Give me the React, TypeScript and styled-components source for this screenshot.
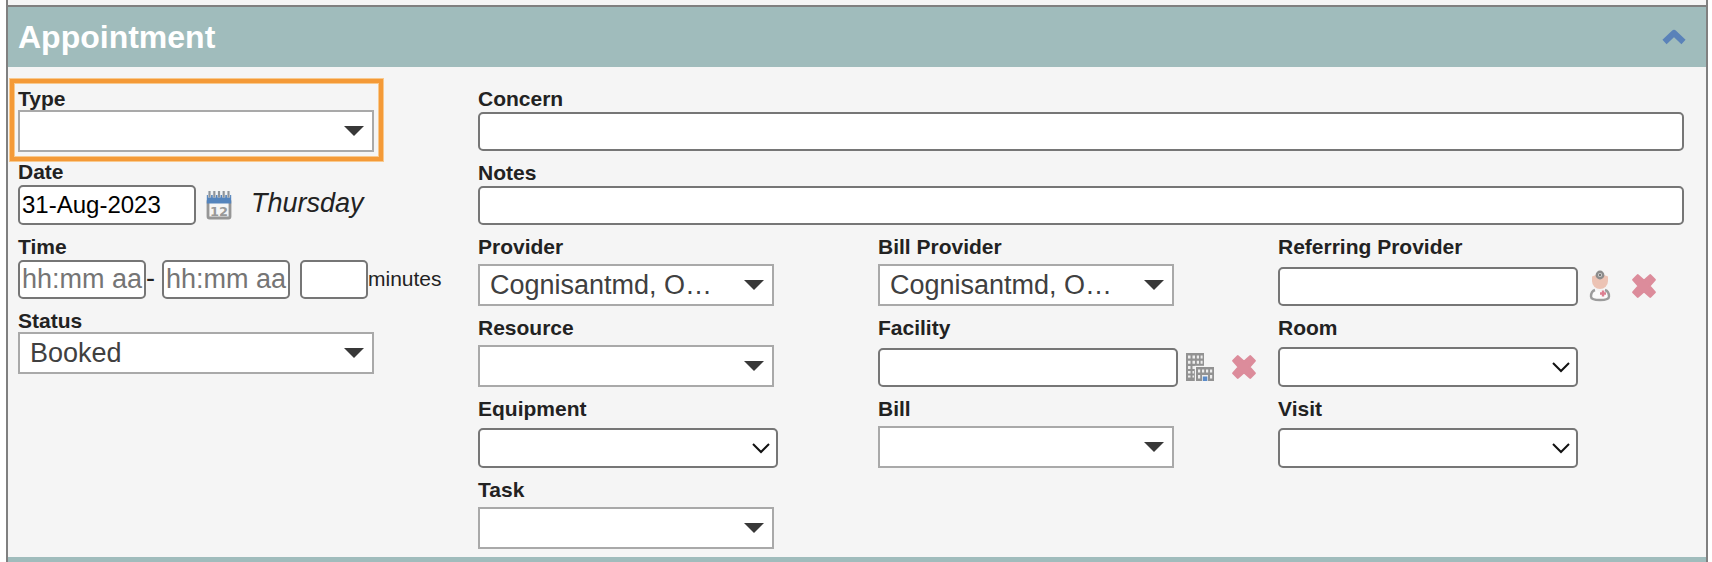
import React, { useState } from "react";
import styled, { createGlobalStyle } from "styled-components";

const GlobalStyle = createGlobalStyle`
  * { box-sizing: border-box; }
  body {
    margin: 0;
    background: #ffffff;
    color: #222222;
    font-family: "Liberation Sans", Arial, Helvetica, sans-serif;
    font-size: 21px;
  }
  input, select, button { font-family: inherit; margin: 0; }
`;

const Panel = styled.form`
  margin: 0 4px 0 6px;
  padding-top: 5px;
  border-left: 2px solid #808080;
  border-right: 2px solid #808080;
  background: #f5f5f5;
`;

const SectionHeader = styled.header`
  display: flex;
  align-items: center;
  justify-content: space-between;
  height: 62px;
  padding: 0 16px 0 10px;
  border-top: 2px solid #808080;
  background: #a0bcbc;
`;

const SectionTitle = styled.h2`
  margin: 0;
  color: #ffffff;
  font-size: 32px;
  line-height: 36px;
  font-weight: bold;
`;

const NextSection = styled.div`
  height: 5px;
  background: #a0bcbc;
`;

const Body = styled.div`
  display: grid;
  grid-template-columns: 460px 1fr;
  padding: 10px 22px 8px 10px;
`;

const Column = styled.div`
  display: flex;
  flex-direction: column;
`;

const FieldGrid = styled.div`
  display: grid;
  grid-template-columns: repeat(3, 1fr);
  padding-right: 6px;
`;

const Field = styled.div<{ $drop?: boolean }>`
  position: relative;
  padding-top: 11px;
  width: ${(p) => (p.$drop ? "356px" : "auto")};
  margin-bottom: ${(p) => (p.$drop ? "-2px" : "0")};
`;

const Label = styled.label`
  display: block;
  font-size: 21px;
  line-height: 22px;
  font-weight: bold;
`;

const ControlRow = styled.div<{ $height: number }>`
  display: flex;
  align-items: flex-end;
  height: ${(p) => p.$height}px;
`;

const InlineRow = styled.div`
  display: flex;
  align-items: center;
  margin-top: 2px;
`;

const UnitLabel = styled.label`
  line-height: 24px;
  padding-bottom: 2px;
`;

const TextBox = styled.input<{ $width?: string; $size?: number; $height?: number }>`
  width: ${(p) => p.$width ?? "100%"};
  height: ${(p) => p.$height ?? 39}px;
  flex: none;
  padding: 0 0 0 2px;
  border: 2px solid #767676;
  border-radius: 5px;
  background: #ffffff;
  color: #000000;
  font-size: ${(p) => p.$size ?? 27}px;
  outline: none;
  &::placeholder { color: #757575; opacity: 1; }
`;

const SelectShell = styled.div<{ $width: string }>`
  display: grid;
  align-items: center;
  width: ${(p) => p.$width};
  > * { grid-area: 1 / 1; }
  > svg { justify-self: end; pointer-events: none; }
`;

const FlatSelect = styled.select`
  appearance: none;
  width: 100%;
  height: 42px;
  padding: 0 40px 0 10px;
  border: 2px solid #a9a9a9;
  border-radius: 0;
  background: #ffffff;
  color: #404040;
  font-size: 27px;
  outline: none;
`;

const RoundSelect = styled(FlatSelect)`
  height: 40px;
  border-color: #767676;
  border-radius: 5px;
`;

const IconButton = styled.button<{ $gap?: number }>`
  display: flex;
  align-items: center;
  justify-content: center;
  flex: none;
  width: 32px;
  height: 40px;
  margin-left: ${(p) => p.$gap ?? 0}px;
  padding: 0;
  border: 0;
  background: none;
  cursor: pointer;
`;

const LargeText = styled.span<{ $before?: number; $after?: number; $italic?: boolean }>`
  margin-left: ${(p) => p.$before ?? 0}px;
  margin-right: ${(p) => p.$after ?? 0}px;
  padding-bottom: 4px;
  font-size: 27px;
  line-height: 30px;
  font-style: ${(p) => (p.$italic ? "italic" : "normal")};
`;

const TimeGap = styled.span`
  width: 10px;
`;

const Highlight = styled.div`
  position: absolute;
  top: 2px;
  left: -8px;
  right: -9px;
  bottom: -9px;
  border: 4px solid #f49a37;
  box-shadow: 0 0 0 1px #f8c98e, inset 0 0 0 1px #f8c98e;
  pointer-events: none;
`;

const CollapseIcon = () => (
  <svg width="26" height="20" viewBox="0 0 26 20" fill="none" aria-hidden="true">
    <path d="M3.5 15 L13 6 L22.5 15" stroke="#5a82b9" strokeWidth="6" strokeLinejoin="round" />
  </svg>
);

const CalendarIcon = () => (
  <svg width="26" height="30" viewBox="0 0 26 30" aria-hidden="true">
    <rect x="2" y="10" width="22" height="18" rx="1.5" fill="#f5f5f5" stroke="#969696" strokeWidth="2.8" />
    <path d="M0.8 5h24.4v8.5h-24.4z" fill="#5484bd" />
    <path d="M3.5 1v6.5M8.3 1v6.5M13 1v6.5M17.7 1v6.5M22.5 1v6.5" stroke="#dfe5ec" strokeWidth="3.2" />
    <path d="M3.5 1v6.5M8.3 1v6.5M13 1v6.5M17.7 1v6.5M22.5 1v6.5" stroke="#8f9499" strokeWidth="2" />
    <text x="13" y="25.5" textAnchor="middle" fontFamily="DejaVu Sans, sans-serif" fontWeight="bold" fontSize="13" fill="#999999">12</text>
  </svg>
);

const FacilityIcon = () => (
  <svg width="28" height="28" viewBox="0 0 28 28" aria-hidden="true">
    <path d="M0 0h18v28h-18z" fill="#929292" />
    <path
      d="M2 2.5h2.5v3h-2.5zM6.5 2.5h2.5v3h-2.5zM10.8 2.5h2.2v3h-2.2zM14.6 2.5h2v3h-2zM2 7.8h2.5v3h-2.5zM6.5 7.8h2.5v3h-2.5zM10.8 7.8h2.2v3h-2.2zM14.6 7.8h2v3h-2zM2 13h2.5v3h-2.5zM6.5 13h2.5v3h-2.5zM2 18h2.5v2.6h-2.5zM6.5 18h1.5v2.6h-1.5zM2 22.5h2.5v2h-2.5zM6.5 22.5h1.5v2h-1.5z"
      fill="#ededed"
    />
    <path d="M8.8 12.8h20v15.2h-20z" fill="#f5f5f5" />
    <path d="M10 14h18v14h-18z" fill="#929292" />
    <path
      d="M12 16.5h2.2v3h-2.2zM16 16.5h2.2v3h-2.2zM20 16.5h2.2v3h-2.2zM24 16.5h2.2v3h-2.2zM12 22h2.2v3.5h-2.2zM24 22h2.2v3.5h-2.2zM16 22h6v6h-6z"
      fill="#ededed"
    />
    <path d="M16.8 23.5h4.5v4.5h-4.5z" fill="#5a8bc9" />
  </svg>
);

const DoctorIcon = () => (
  <svg width="24" height="32" viewBox="0 0 24 32" aria-hidden="true">
    <path d="M4 6.5 Q12 2.5 20 6.5 V11 A8 8 0 0 1 4 11z" fill="#ecc3b4" />
    <circle cx="12" cy="5" r="3.2" fill="#d8d8d8" stroke="#8c8c8c" strokeWidth="2.4" />
    <circle cx="12" cy="5" r="1.2" fill="#777777" />
    <path
      d="M7.5 19.5 C4 20.5 3 23.5 3 26.5 C3 29 5 30 12 30 C19 30 21 29 21 26.5 C21 23.5 20 20.5 16.5 19.5 L12 22z"
      fill="#fbfbfb"
    />
    <path
      d="M7 20 C4 21 3 23.5 3 26.5 C3 29 5 30 12 30 C19 30 21 29 21 26.5 C21 23.5 20 21 17 20"
      fill="none"
      stroke="#9c9c9c"
      strokeWidth="2.4"
    />
    <path d="M15 20.5v6M12 23.5h6" stroke="#dc7f91" strokeWidth="2.4" />
  </svg>
);

const ClearIcon = () => (
  <svg width="26" height="26" viewBox="0 0 26 26" aria-hidden="true">
    <path
      d="M6.8 2.3 L13 7.8 L19.2 2.3 L23.7 6.8 L18.2 13 L23.7 19.2 L19.2 23.7 L13 18.2 L6.8 23.7 L2.3 19.2 L7.8 13 L2.3 6.8z"
      fill="#dc8c9b"
      stroke="#dc8c9b"
      strokeWidth="2.4"
      strokeLinejoin="round"
    />
  </svg>
);

const TriangleIcon = () => (
  <svg width="30" height="10" viewBox="0 0 30 10" aria-hidden="true">
    <path d="M0 0h20l-10 10z" fill="#383838" />
  </svg>
);

const ChevronIcon = () => (
  <svg width="26" height="12" viewBox="0 0 26 12" fill="none" aria-hidden="true">
    <path d="M1 2 L9 10 L17 2" stroke="#111111" strokeWidth="2" />
  </svg>
);

interface DropDownProps {
  id: string;
  value?: string;
  width: string;
  rounded?: boolean;
}

function DropDown({ id, value = "", width, rounded }: DropDownProps) {
  const Control = rounded ? RoundSelect : FlatSelect;
  return (
    <SelectShell $width={width}>
      <Control id={id} defaultValue={value}>
        <option value={value}>{value}</option>
      </Control>
      {rounded ? <ChevronIcon /> : <TriangleIcon />}
    </SelectShell>
  );
}

interface GridFieldProps {
  id: string;
  label: string;
  kind: "flat" | "rounded" | "lookup";
  value?: string;
  icon?: React.ReactNode;
}

function GridField({ id, label, kind, value, icon }: GridFieldProps) {
  return (
    <Field>
      <Label htmlFor={id}>{label}</Label>
      <ControlRow $height={48}>
        {kind === "lookup" ? (
          <>
            <TextBox id={id} type="text" $width="75%" />
            <IconButton type="button" $gap={6} aria-label={`Find ${label}`}>
              {icon}
            </IconButton>
            <IconButton type="button" $gap={12} aria-label={`Clear ${label}`}>
              <ClearIcon />
            </IconButton>
          </>
        ) : (
          <DropDown id={id} value={value} width={kind === "flat" ? "74%" : "75%"} rounded={kind === "rounded"} />
        )}
      </ControlRow>
    </Field>
  );
}

export default function App() {
  const [open, setOpen] = useState(true);
  return (
    <>
      <GlobalStyle />
      <Panel>
        <SectionHeader>
          <SectionTitle>Appointment</SectionTitle>
          <IconButton type="button" aria-label="Collapse" aria-expanded={open} onClick={() => setOpen(!open)}>
            <CollapseIcon />
          </IconButton>
        </SectionHeader>
        {open && (
          <Body>
            <Column>
              <Field $drop>
                <Label htmlFor="type">Type</Label>
                <DropDown id="type" width="100%" />
                <Highlight />
              </Field>
              <Field>
                <Label htmlFor="date">Date</Label>
                <InlineRow>
                  <TextBox id="date" type="text" defaultValue="31-Aug-2023" $width="178px" $size={24} $height={40} />
                  <IconButton type="button" $gap={7} aria-label="Pick a date">
                    <CalendarIcon />
                  </IconButton>
                  <LargeText $italic $before={16}>Thursday</LargeText>
                </InlineRow>
              </Field>
              <Field>
                <Label htmlFor="start">Time</Label>
                <InlineRow>
                  <TextBox id="start" type="text" placeholder="hh:mm aa" $width="128px" />
                  <LargeText $after={7}>-</LargeText>
                  <TextBox type="text" placeholder="hh:mm aa" aria-label="End time" $width="128px" />
                  <TimeGap />
                  <TextBox id="minutes" type="text" $width="68px" />
                  <UnitLabel htmlFor="minutes">minutes</UnitLabel>
                </InlineRow>
              </Field>
              <Field $drop>
                <Label htmlFor="status">Status</Label>
                <DropDown id="status" value="Booked" width="100%" />
              </Field>
            </Column>
            <Column>
              <Field>
                <Label htmlFor="concern">Concern</Label>
                <InlineRow>
                  <TextBox id="concern" type="text" />
                </InlineRow>
              </Field>
              <Field>
                <Label htmlFor="notes">Notes</Label>
                <InlineRow>
                  <TextBox id="notes" type="text" />
                </InlineRow>
              </Field>
              <FieldGrid>
                <GridField id="provider" label="Provider" kind="flat" value="Cognisantmd, O…" />
                <GridField id="bill-provider" label="Bill Provider" kind="flat" value="Cognisantmd, O…" />
                <GridField id="referring" label="Referring Provider" kind="lookup" icon={<DoctorIcon />} />
                <GridField id="resource" label="Resource" kind="flat" />
                <GridField id="facility" label="Facility" kind="lookup" icon={<FacilityIcon />} />
                <GridField id="room" label="Room" kind="rounded" />
                <GridField id="equipment" label="Equipment" kind="rounded" />
                <GridField id="bill" label="Bill" kind="flat" />
                <GridField id="visit" label="Visit" kind="rounded" />
                <GridField id="task" label="Task" kind="flat" />
              </FieldGrid>
            </Column>
          </Body>
        )}
        <NextSection />
      </Panel>
    </>
  );
}
